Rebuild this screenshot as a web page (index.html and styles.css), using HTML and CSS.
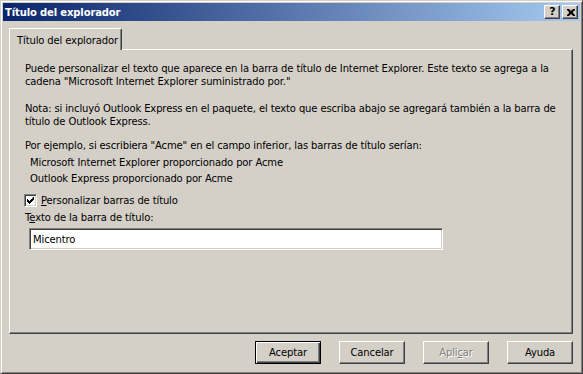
FILE: index.html
```html
<!DOCTYPE html>
<html>
  <head>
    <meta charset="utf-8" />
    <link rel="stylesheet" href="styles.css">
  </head>
  <body>
    <div class="window">
      <div class="titlebar">
        <span class="title">Título del explorador</span>
        <div class="caption-buttons">
          <span class="caption-btn help">?</span>
          <span class="caption-btn close">
            <svg width="8" height="7" viewBox="0 0 8 7">
              <path d="M0 0h2l2 2 2-2h2v1l-2 2v1l2 2v1h-2l-2-2-2 2h-2v-1l2-2v-1l-2-2z" fill="#000"/>
            </svg>
          </span>
        </div>
      </div>

      <div class="client">
        <div class="tabstrip">
          <div class="tab">Título del explorador</div>
        </div>

        <div class="panel">
          <p class="para">Puede personalizar el texto que aparece en la barra de título de Internet Explorer. Este texto se agrega a la<br>cadena "Microsoft Internet Explorer suministrado por."</p>
          <p class="para">Nota: si incluyó Outlook Express en el paquete, el texto que escriba abajo se agregará también a la barra de<br>título de Outlook Express.</p>
          <p class="para last">Por ejemplo, si escribiera "Acme" en el campo inferior, las barras de título serían:</p>
          <div class="examples">
            <div>Microsoft Internet Explorer proporcionado por Acme</div>
            <div>Outlook Express proporcionado por Acme</div>
          </div>

          <label class="check-row">
            <span class="checkbox">
              <svg width="7" height="7" viewBox="0 0 7 7">
                <path d="M6 0h1v3h-1v1h-1v1h-1v1h-1v1h-1v-1h-1v-1h-1v-3h1v1h1v1h1v-1h1v-1h1z" fill="#000"/>
              </svg>
            </span>
            <span><u>P</u>ersonalizar barras de título</span>
          </label>

          <div class="field-label">T<u>e</u>xto de la barra de título:</div>
          <div class="textbox">Micentro</div>
        </div>

        <div class="buttons">
          <span class="btn default">Aceptar</span>
          <span class="btn">Cancelar</span>
          <span class="btn disabled">Apli<u>c</u>ar</span>
          <span class="btn">Ayuda</span>
        </div>
      </div>
    </div>
  </body>
</html>
```

FILE: styles.css
```css
* {
  box-sizing: border-box;
}

body {
  margin: 0;
  font-family: "DejaVu Sans", Verdana, sans-serif;
  font-size: 10px;
  letter-spacing: -0.13px;
  background: #d4d0c8;
  color: #000;
}

.window {
  width: 583px;
  height: 374px;
  background: #d4d0c8;
  border: 1px solid;
  border-color: #d4d0c8 #404040 #404040 #d4d0c8;
  box-shadow: inset 1px 1px #fff, inset -1px -1px #808080;
  padding: 2px;
  display: flex;
  flex-direction: column;
}

.titlebar {
  height: 18px;
  background: linear-gradient(to right, #0a246a, #a6caf0);
  display: flex;
  align-items: center;
  justify-content: space-between;
  padding: 0 2px 0 2px;
}

.title {
  color: #fff;
  font-weight: bold;
  font-size: 10px;
}

.caption-buttons {
  display: flex;
  gap: 2px;
}

.caption-btn {
  width: 16px;
  height: 14px;
  background: #d4d0c8;
  border: 1px solid;
  border-color: #fff #404040 #404040 #fff;
  box-shadow: inset -1px -1px #808080;
  display: flex;
  align-items: center;
  justify-content: center;
}

.help {
  font-weight: bold;
  font-size: 11px;
  line-height: 12px;
  padding-left: 1px;
}

.close svg {
  display: block;
  margin-left: 1px;
}

.client {
  flex: 1;
  padding: 7px 7px 0 6px;
  display: flex;
  flex-direction: column;
}

.tabstrip {
  height: 21px;
  display: flex;
}

.tab {
  position: relative;
  z-index: 1;
  width: 113px;
  height: 22px;
  margin-bottom: -1px;
  background: #d4d0c8;
  border-top: 1px solid #fff;
  border-left: 1px solid #fff;
  border-right: 1px solid #404040;
  border-top-right-radius: 2px;
  box-shadow: inset -1px 0 #808080;
  padding: 5px 0 0 7px;
  line-height: 13px;
}

.panel {
  height: 285px;
  border: 1px solid;
  border-color: #fff #404040 #404040 #fff;
  box-shadow: inset -1px -1px #808080;
  padding: 12px 0 0 15px;
  line-height: 13px;
}

.para {
  margin: 0 0 14px;
}

.para + .para {
  margin-bottom: 11px;
}

.para.last {
  margin: 0;
}

.examples {
  padding-left: 5px;
  margin-top: 3px;
  line-height: 16px;
}

.check-row {
  display: flex;
  align-items: center;
  gap: 4px;
  margin-top: 6px;
  margin-left: -1px;
  height: 14px;
}

.checkbox {
  width: 13px;
  height: 13px;
  background: #fff;
  border: 1px solid;
  border-color: #808080 #fff #fff #808080;
  box-shadow: inset 1px 1px #404040, inset -1px -1px #d4d0c8;
  display: flex;
  align-items: center;
  justify-content: center;
}

.checkbox svg {
  display: block;
}

.field-label {
  margin-top: 4px;
}

.textbox {
  width: 414px;
  height: 22px;
  margin: 4px 0 0 4px;
  background: #fff;
  border: 1px solid;
  border-color: #808080 #fff #fff #808080;
  box-shadow: inset 1px 1px #404040, inset -1px -1px #d4d0c8;
  padding: 4px 0 0 3px;
  line-height: 13px;
}

.buttons {
  display: flex;
  justify-content: flex-end;
  gap: 18px;
  margin-top: 7px;
}

.btn {
  width: 66px;
  height: 23px;
  background: #d4d0c8;
  border: 1px solid;
  border-color: #fff #404040 #404040 #fff;
  box-shadow: inset -1px -1px #808080;
  display: flex;
  align-items: center;
  justify-content: center;
}

.btn.default {
  border: 1px solid #000;
  box-shadow: inset 1px 1px #fff, inset -1px -1px #404040, inset -2px -2px #808080;
}

.btn.disabled {
  color: #808080;
  text-shadow: 1px 1px #fff;
}
```
